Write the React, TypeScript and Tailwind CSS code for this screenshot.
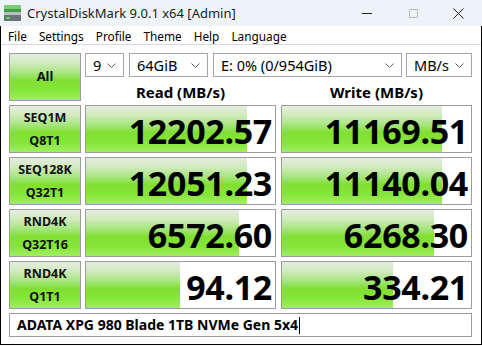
import React from 'react'

const meter =
  'bg-[linear-gradient(to_bottom,#e6ece2_0%,#cdeab8_22%,#a4e57a_42%,#80df30_58%,#86e63a_80%,#a2ef62_100%)]'

const rows = [
  { a: 'SEQ1M', b: 'Q8T1', read: '12202.57', readW: 161, write: '11169.51', writeW: 160 },
  { a: 'SEQ128K', b: 'Q32T1', read: '12051.23', readW: 161, write: '11140.04', writeW: 160 },
  { a: 'RND4K', b: 'Q32T16', read: '6572.60', readW: 153, write: '6268.30', writeW: 152 },
  { a: 'RND4K', b: 'Q1T1', read: '94.12', readW: 94, write: '334.21', writeW: 111 },
]

const Chevron = () => (
  <svg width="9" height="5" viewBox="0 0 9 5" className="shrink-0">
    <path d="M0.5 0.5 L4.5 4.5 L8.5 0.5" fill="none" stroke="#606060" strokeWidth="1" />
  </svg>
)

const Select = ({ label, w }: { label: string; w: string }) => (
  <div
    className={`${w} flex h-[24px] items-center justify-between border border-[#a6a6a6] bg-white pl-[7px] pr-[7px] text-[14.5px] text-black`}
  >
    <span className="leading-none">{label}</span>
    <Chevron />
  </div>
)

const Value = ({ text, fill }: { text: string; fill: number }) => (
  <div className="relative flex h-[48px] w-[191px] items-center justify-end overflow-hidden border border-[#9c9c9c] bg-white pr-[3px]">
    <div className={`absolute top-0 bottom-0 left-0 ${meter}`} style={{ width: fill }} />
    <span className="relative pt-[3px] text-[34px] font-bold leading-none tracking-[-0.3px] text-black">
      {text}
    </span>
  </div>
)

const Label = ({ a, b }: { a: string; b: string }) => (
  <div
    className={`flex h-[48px] w-[72px] flex-col items-center justify-center gap-[10px] border border-[#9c9c9c] pt-[1px] ${meter} text-[12.5px] font-bold leading-none text-[#111]`}
  >
    <span>{a}</span>
    <span>{b}</span>
  </div>
)

export default function App() {
  return (
    <div className="h-[347px] w-[482px] bg-white font-['Noto_Sans',sans-serif] text-black">
      {/* title bar */}
      <div className="flex h-[26px] items-center bg-[#eef3f8]">
        <svg width="17" height="16" viewBox="0 0 17 16" className="ml-[4px] mr-[6px]">
          <rect x="0" y="0" width="17" height="4" fill="#7ccf6c" />
          <rect x="0" y="4" width="17" height="3" fill="#3f9e48" />
          <rect x="0" y="7" width="17" height="3" fill="#b8bfc2" />
          <rect x="0" y="10" width="17" height="6" fill="#6b7478" />
          <rect x="2" y="12" width="4" height="2" fill="#5ed05a" />
        </svg>
        <span className="text-[13px] leading-none text-[#1b1b1b]">CrystalDiskMark 9.0.1 x64 [Admin]</span>
        <div className="ml-auto flex h-full">
          <div className="flex w-[46px] items-center justify-center">
            <div className="h-px w-[10px] bg-[#222]" />
          </div>
          <div className="flex w-[46px] items-center justify-center">
            <div className="h-[9px] w-[9px] rounded-[1px] border border-[#b8b8b8]" />
          </div>
          <div className="flex w-[46px] items-center justify-center pr-[1px]">
            <svg width="11" height="11" viewBox="0 0 11 11">
              <path d="M0.5 0.5 L10.5 10.5 M10.5 0.5 L0.5 10.5" stroke="#222" strokeWidth="1" />
            </svg>
          </div>
        </div>
      </div>

      {/* window body */}
      <div className="h-[319px] border-x border-b border-black">
        <div className="flex h-[19px] items-center gap-[12px] border-b border-[#d9d9d9] pl-[7px] pt-[3px] text-[11.8px] leading-none text-black">
          <span>File</span>
          <span>Settings</span>
          <span>Profile</span>
          <span>Theme</span>
          <span>Help</span>
          <span>Language</span>
        </div>

        <div className="flex flex-col gap-[4px] pl-[8px] pt-[8px]">
          <div className="flex gap-[4px]">
            <div
              className={`flex h-[48px] w-[72px] items-center justify-center border border-[#9c9c9c] ${meter} text-[13px] font-bold text-[#111]`}
            >
              All
            </div>
            <div className="flex w-[387px] flex-col">
              <div className="flex gap-[5px]">
                <Select label="9" w="w-[39px]" />
                <Select label="64GiB" w="w-[79px]" />
                <Select label="E: 0% (0/954GiB)" w="w-[189px]" />
                <Select label="MB/s" w="w-[66px] -ml-px" />
              </div>
              <div className="flex h-[24px] gap-[5px] pt-[6px] text-[15px] font-bold">
                <div className="flex w-[191px] items-center justify-center">Read (MB/s)</div>
                <div className="flex w-[191px] items-center justify-center">Write (MB/s)</div>
              </div>
            </div>
          </div>

          {rows.map((r, i) => (
            <div key={i} className="flex">
              <Label a={r.a} b={r.b} />
              <div className="ml-[4px]">
                <Value text={r.read} fill={r.readW} />
              </div>
              <div className="ml-[5px]">
                <Value text={r.write} fill={r.writeW} />
              </div>
            </div>
          ))}

          <div className="flex h-[24px] w-[463px] items-center border border-[#9c9c9c] bg-white pl-[7px] text-[14px] font-bold">
            <span className="leading-none">ADATA XPG 980 Blade 1TB NVMe Gen 5x4</span>
            <span className="ml-px h-[17px] w-px bg-black" />
          </div>
        </div>
      </div>
    </div>
  )
}
